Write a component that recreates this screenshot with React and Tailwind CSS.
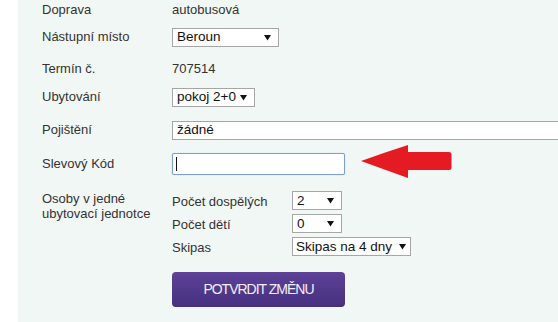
const Caret = () => (
	<svg width="7" height="7" viewBox="0 0 7 7" className="shrink-0">
		<path d="M0 1 L7 1 L3.5 6.5 Z" fill="#111" />
	</svg>
);

const Select = ({ value, width }) => (
	<div
		className={`flex items-center justify-between h-[19px] bg-white border border-[#a6a6a6] pl-[4px] pr-[7px] text-[13.5px] text-[#111] leading-none ${width}`}
	>
		<span>{value}</span>
		<Caret />
	</div>
);

const Row = ({ label, top, height, children }) => (
	<div className={`flex items-center ${top} ${height}`}>
		<div className="w-[130px] shrink-0">{label}</div>
		{children}
	</div>
);

const Arrow = () => (
	<svg width="91" height="34" viewBox="0 0 91 34" className="ml-[16px] mb-[5px] shrink-0">
		<path
			d="M0 16 Q22 8 47 0 L47 7 L88 7 Q90.5 7 90.5 9.5 L90.5 22.5 Q90.5 25 88 25 L47 25 L47 33 Q22 24 0 16 Z"
			fill="#e41b22"
		/>
	</svg>
);

const App = () => {
	return (
		<div className="w-[558px] h-[322px] bg-white overflow-hidden font-['Liberation_Sans',Arial,sans-serif] text-[13px] text-[#333]">
			<div className="ml-[18px] h-full bg-[#f1f7f5] pl-[24px] flex flex-col">
				<Row label="Doprava" top="mt-0" height="h-[20px]">
					<span>autobusová</span>
				</Row>
				<Row label="Nástupní místo" top="mt-[7px]" height="h-[20px]">
					<Select value="Beroun" width="w-[107px]" />
				</Row>
				<Row label="Termín č." top="mt-[12px]" height="h-[20px]">
					<span>707514</span>
				</Row>
				<Row label="Ubytování" top="mt-[8px]" height="h-[20px]">
					<Select value="pokoj 2+0" width="w-[83px]" />
				</Row>
				<Row label="Pojištění" top="mt-[13px]" height="h-[20px]">
					<div className="flex items-center h-[19px] flex-1 mr-[-10px] bg-white border border-[#a6a6a6] pl-[4px] text-[13.5px] text-[#111] leading-none">
						žádné
					</div>
				</Row>
				<Row label="Slevový Kód" top="mt-[13px]" height="h-[22px]">
					<div className="flex items-center h-[22px] w-[173px] bg-white border border-[#7d9fd6] rounded-[2px] pl-[3px] shadow-[0_0_1px_#9bb8e8]">
						<div className="w-px h-[14px] bg-[#111]" />
					</div>
					<Arrow />
				</Row>
				<div className="flex mt-[16px]">
					<div className="w-[130px] shrink-0 leading-[15px]">
						Osoby v jedné
						<br />
						ubytovací jednotce
					</div>
					<div className="flex flex-col">
						<div className="flex items-center h-[19px]">
							<span className="w-[120px] pt-[3px]">Počet dospělých</span>
							<Select value="2" width="w-[50px]" />
						</div>
						<div className="flex items-center h-[19px] mt-[4px]">
							<span className="w-[120px] pt-[3px]">Počet dětí</span>
							<Select value="0" width="w-[50px]" />
						</div>
						<div className="flex items-center h-[19px] mt-[4px]">
							<span className="w-[120px] pt-[3px]">Skipas</span>
							<div className="flex items-center justify-between h-[19px] w-[119px] bg-white border border-[#a6a6a6] pl-[3px] pr-[4px] text-[13.5px] text-[#111] leading-none">
								<span>Skipas na 4 dny</span>
								<Caret />
							</div>
						</div>
						<button className="mt-[16px] w-[173px] h-[35px] rounded-[4px] bg-gradient-to-b from-[#5d4298] to-[#46307e] text-[#f1eef8] text-[14px] tracking-[-1px]">
							POTVRDIT ZMĚNU
						</button>
					</div>
				</div>
			</div>
		</div>
	);
};

export default App;
